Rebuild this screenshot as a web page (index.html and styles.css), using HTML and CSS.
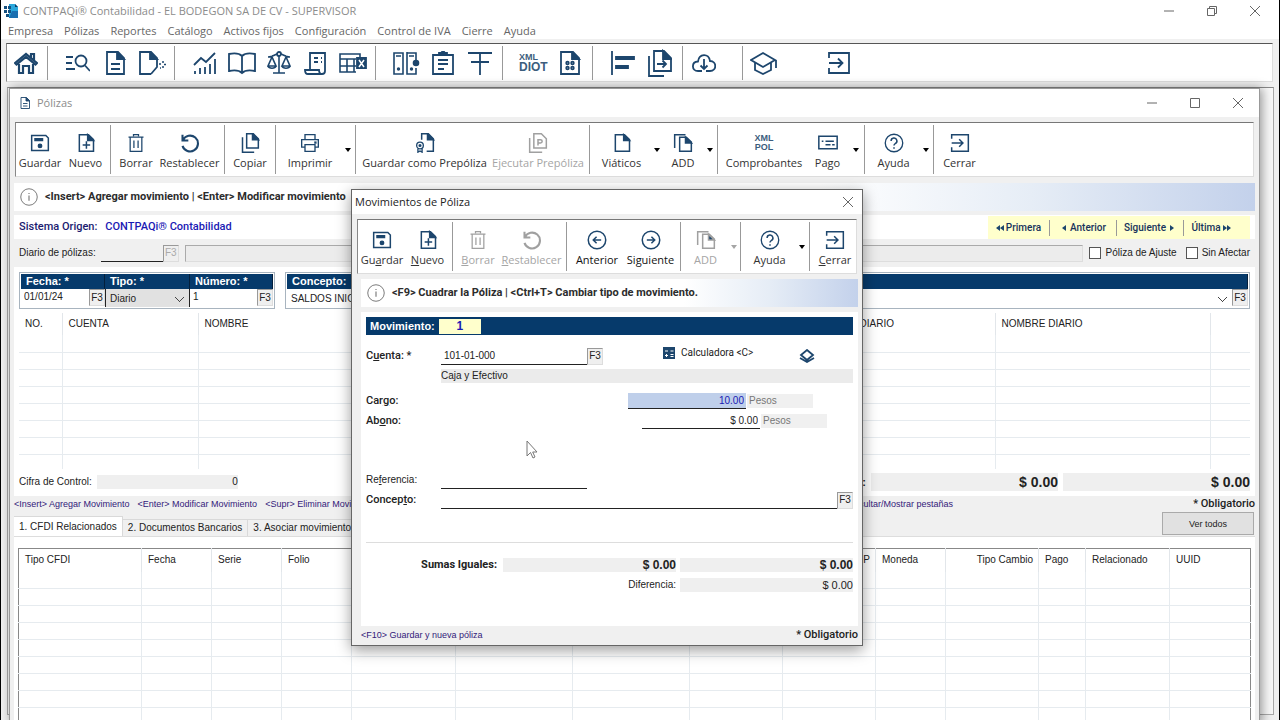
FILE: index.html
```html
<!doctype html>
<html lang="es">
<head>
  <meta charset="UTF-8">
  <title>CONTPAQi® Contabilidad</title>
  <link rel="stylesheet" href="styles.css">
</head>
<body>
  <svg class="sprite" aria-hidden="true">
    <symbol id="doc" viewBox="0 0 24 24"><path d="M4 2h11l6 6v14H4z"/><path class="fill" d="M14 2l7 7h-7z"/></symbol>
    <symbol id="doc-text" viewBox="0 0 24 24"><path d="M4 1h11l6 6v16H4z"/><path class="fill" d="M14 1l7 7h-7z"/><path d="M8 13h9M8 18h9"/></symbol>
    <symbol id="doc-plus" viewBox="0 0 24 24"><path d="M4 2h11l6 6v14H4z"/><path class="fill" d="M14 2l7 7h-7z"/><path d="M12.500 10v9M8 14.500h9"/></symbol>
    <symbol id="disk" viewBox="0 0 24 24"><path d="M2 3h17l3 3v15H2z"/><path class="fill" d="M6 7h9v2H6z"/><circle class="fill" cx="12" cy="15.500" r="2"/></symbol>
    <symbol id="trash" viewBox="0 0 24 24"><path d="M3 5h18M9 4V2h6v2M5 5v17h14V5M9.500 9v9M14.500 9v9" stroke-width="1.500"/></symbol>
    <symbol id="undo" viewBox="0 0 24 24"><path d="M3 2v7h7M3.500 8.500a9.500 9.500 0 1 1-.5 7" stroke-width="2.500"/></symbol>
    <symbol id="copy" viewBox="0 0 24 24"><path d="M8 1h8l6 6v11H8z"/><path class="fill" d="M15 1l7 7h-7z"/><path d="M3 5v18h14"/></symbol>
    <symbol id="print" viewBox="0 0 24 24"><path d="M6 8V2h12v6M6 17H2V8h20v9h-4M6 14h12v8H6z" stroke-width="1.600"/><path class="fill" d="M18 11h1v1h-1z"/></symbol>
    <symbol id="seal" viewBox="0 0 24 24"><path d="M8 8V1h8l6 6v15h-8"/><path class="fill" d="M15 1l7 7h-7z"/><circle cx="6" cy="15" r="4" stroke-width="1.600"/><circle cx="6" cy="15" r="1"/><path d="M3.500 18.500V23L6 21.500 8.500 23v-4.500" stroke-width="1.600"/></symbol>
    <symbol id="add" viewBox="0 0 24 24"><path d="M8 5h8l6 6v11H8z"/><path class="fill" d="M15 5l7 7h-7z"/><path d="M2 18V2h13"/></symbol>
    <symbol id="card" viewBox="0 0 24 24"><path d="M1 4h22v15H1z"/><path d="M9 10h10M9 14h6M17 14h3M4.500 10h2"/></symbol>
    <symbol id="help" viewBox="0 0 24 24"><circle cx="12" cy="12" r="10.500" stroke-width="1.600"/><path d="M8.500 9.500a3.500 3.500 0 1 1 5 3.200c-1 .6-1.500 1-1.500 2.300M12 17v2"/></symbol>
    <symbol id="exit" viewBox="0 0 24 24"><path d="M2 7V2h20v20H2v-5M2 12h13M11 7.500l4.500 4.500-4.500 4.500"/></symbol>
    <symbol id="prev" viewBox="0 0 24 24"><circle cx="12" cy="12" r="10.500"/><path d="M17 12H7.500M11.500 8l-4 4 4 4"/></symbol>
    <symbol id="next" viewBox="0 0 24 24"><circle cx="12" cy="12" r="10.500"/><path d="M7 12h9.500M12.500 8l4 4-4 4"/></symbol>
    <symbol id="down" viewBox="0 0 8 8"><path d="M1 2h6L4 6z" fill="currentColor" stroke="none"/></symbol>
    <symbol id="info" viewBox="0 0 24 24"><circle cx="12" cy="12" r="11" stroke-width="1.300"/><path d="M12 10v7M12 6.500v1.500" stroke-width="1.500"/></symbol>
    <symbol id="min" viewBox="0 0 10 10"><path d="M0 5h10" stroke-width="1"/></symbol>
    <symbol id="max" viewBox="0 0 10 10"><path d="M.5.5h9v9h-9z" stroke-width="1"/></symbol>
    <symbol id="close" viewBox="0 0 10 10"><path d="M0 0l10 10M10 0L0 10" stroke-width="1"/></symbol>
  </svg>

  <header class="titlebar">
    <svg class="logo" viewBox="0 0 14 14"><path d="M5 0h6l3 3v11H5z" fill="#2aa7dc"/><path d="M8 7h6v7H5z" fill="#1b6fb0"/><path d="M11 0l3 3h-3z" fill="#0c3c66"/><path d="M0 2h3v3H0zM0 6h3v3H0zM4 6h3v3H4zM4 2h3v3H4zM2 10h3v3H2z" fill="#14507f"/></svg>
    <span class="caption">CONTPAQi® Contabilidad - EL BODEGON SA DE CV - SUPERVISOR</span>
    <div class="winctl">
      <button aria-label="Minimizar"><svg><use href="#min"/></svg></button>
      <button aria-label="Restaurar"><svg viewBox="0 0 10 10"><path d="M.5 2.500h7v7h-7zM2.500 2.500v-2h7v7h-2" stroke-width="1"/></svg></button>
      <button aria-label="Cerrar"><svg><use href="#close"/></svg></button>
    </div>
  </header>

  <nav class="menu">
    <a href="#">Empresa</a><a href="#">Pólizas</a><a href="#">Reportes</a><a href="#">Catálogo</a><a href="#">Activos fijos</a><a href="#">Configuración</a><a href="#">Control de IVA</a><a href="#">Cierre</a><a href="#">Ayuda</a>
  </nav>

  <div class="mainbar">
    <div class="grp home">
      <button aria-label="Inicio"><svg viewBox="0 0 24 24"><path d="M1 12L12 3l11 9-1.500 1.500L12 6l-9.500 7.500zM17 7V3h3v6M5 13v9h4v-7h6v7h4v-9"/></svg></button>
    </div>
    <div class="grp">
      <button aria-label="Buscar"><svg viewBox="0 0 24 24"><path d="M0 6h7M0 12h6M0 18h9"/><circle cx="15" cy="10" r="5.500"/><path d="M19 14.500l5 5.500"/></svg></button>
      <button aria-label="Póliza"><svg><use href="#doc-text"/></svg></button>
      <button aria-label="Nueva póliza"><svg class="wide" viewBox="0 0 28 24"><path d="M13 23H2V1h11l6 6v9l-6 7"/><path class="fill" d="M12 1l7 7h-7z"/><path d="M21 13h2M25 10v2M25 15v2M22 17h1M26 13.500h2" stroke-width="1.500"/></svg></button>
    </div>
    <div class="grp">
      <button aria-label="Gráfica"><svg viewBox="0 0 24 24"><path d="M1 14l7-7 5 4 9-9M2 20v3M7 17v6M12 16v7M17 13v10M22 8v15"/></svg></button>
      <button aria-label="Libro"><svg class="wide" viewBox="0 0 28 24"><path d="M14 5c-3-3-8-3-13-2v17c5-1 10-1 13 2 3-3 8-3 13-2V3c-5-1-10-1-13 2zM14 5v17"/></svg></button>
      <button aria-label="Balanza"><svg viewBox="0 0 24 24"><circle cx="12" cy="3" r="2"/><path d="M12 5v17M6 22h12M1 6c4 0 6-2 9-3M23 6c-4 0-6-2-9-3M5 6l-4 9h8zM19 6l-4 9h8zM1 15c1 3 7 3 8 0M15 15c1 3 7 3 8 0" stroke-width="1.600"/></svg></button>
      <button aria-label="Diario"><svg viewBox="0 0 24 24"><path d="M6 18V2h15v18c0 2-1 3-3 3H4c-2 0-3-1-3-4h14c0 3 1 4 3 4M10 7h4M10 11h4M17 7h1M17 11h1M9 1v2M13 1v2M17 1v2"/></svg></button>
      <button aria-label="Hoja de cálculo"><svg class="wide" viewBox="0 0 28 24"><path d="M17 21H1V3h20v3M1 8h16M1 15h16M8 8v13M15 8v13" stroke-width="1.600"/><path class="fill" d="M18 7h9v10h-9z"/><path d="M20 9l5 7M25 9l-5 7" stroke="#fff" stroke-width="1.500"/></svg></button>
    </div>
    <div class="grp">
      <button aria-label="Archivos"><svg class="wide" viewBox="0 0 28 24"><path d="M2 2h9v21H2zM4 5h5M15 2h9v7M15 1v22h9v-6M17 5h5" stroke-width="1.600"/><circle class="fill" cx="6.500" cy="18" r=".8"/><circle class="fill" cx="19.500" cy="18" r=".8"/><circle class="fill" cx="24" cy="12" r="2.400"/></svg></button>
      <button aria-label="Portapapeles"><svg viewBox="0 0 24 24"><path d="M2 4h20v19H2zM7 9h10M7 13h10M7 18h6"/><path class="fill" d="M8 2h8v2H8z"/><circle cx="12" cy="2" r="1.500"/></svg></button>
      <button aria-label="Cuentas T"><svg viewBox="0 0 24 24"><path d="M0 2h24M3 11h18M12 2v22"/></svg></button>
    </div>
    <div class="grp">
      <button class="stack diot"><span>XML</span><b>DIOT</b></button>
      <button aria-label="Archivo digital"><svg viewBox="0 0 24 24"><path d="M3 1h12l6 6v16H3z"/><path class="fill" d="M14 1l7 7h-7z"/><circle cx="9.500" cy="12" r="1.300"/><circle cx="14.500" cy="12" r="1.300"/><circle cx="9.500" cy="17" r="1.300"/><circle cx="14.500" cy="17" r="1.300"/></svg></button>
    </div>
    <div class="grp">
      <button aria-label="Alinear"><svg viewBox="0 0 24 24"><path d="M1 0v24"/><path class="fill" d="M5 6h18v2H5zM5 15h12v2H5z"/></svg></button>
      <button aria-label="Exportar"><svg class="tall" viewBox="0 0 24 28"><path d="M6 2h10l7 7v13H6z"/><path class="fill" d="M15 2l8 8h-8z"/><path d="M1 7v20h15M9 15h9M14.500 11.500L18 15l-3.500 3.500"/></svg></button>
    </div>
    <div class="grp cloud">
      <button aria-label="Nube"><svg viewBox="0 0 24 24"><path d="M10 20H6C-.5 20-1 11 6 10.500 7 2 17 2 18 10c7 0 7 10 0 10h-4M12 8v10M8.500 14.500L12 18l3.500-3.500"/></svg></button>
    </div>
    <div class="grp school">
      <button aria-label="Capacitación"><svg class="wide" viewBox="0 0 28 24"><path d="M1 9l12-7 12 7-12 7zM5 12v7l8 4 8-4v-7M26 9v8"/></svg></button>
      <button aria-label="Salir"><svg><use href="#exit"/></svg></button>
    </div>
  </div>

  <main class="mdi">
    <section class="child">
      <header class="childtitle">
        <svg class="mini"><use href="#doc-text"/></svg>
        <span>Pólizas</span>
        <div class="winctl">
          <button aria-label="Minimizar"><svg><use href="#min"/></svg></button>
          <button aria-label="Maximizar"><svg><use href="#max"/></svg></button>
          <button aria-label="Cerrar"><svg><use href="#close"/></svg></button>
        </div>
      </header>

      <div class="toolbar tb-poliza">
        <button><svg><use href="#disk"/></svg>Guardar</button>
        <button class="end"><svg><use href="#doc-plus"/></svg>Nuevo</button>
        <button class="start"><svg><use href="#trash"/></svg>Borrar</button>
        <button class="end"><svg><use href="#undo"/></svg>Restablecer</button>
        <button class="start end"><svg><use href="#copy"/></svg>Copiar</button>
        <button class="start"><svg><use href="#print"/></svg>Imprimir</button>
        <button class="arrow end" aria-label="Opciones de impresión"><svg><use href="#down"/></svg></button>
        <button class="start"><svg><use href="#seal"/></svg>Guardar como Prepóliza</button>
        <button class="end" disabled><svg viewBox="0 0 24 24"><path d="M7 1h9l6 6v11H7zM2 6v17h15M12 15V8h3a2 2 0 0 1 0 4h-3"/></svg>Ejecutar Prepóliza</button>
        <button class="start"><svg><use href="#doc"/></svg>Viáticos</button>
        <button class="arrow" aria-label="Más viáticos"><svg><use href="#down"/></svg></button>
        <button><svg><use href="#add"/></svg>ADD</button>
        <button class="arrow end" aria-label="Más ADD"><svg><use href="#down"/></svg></button>
        <button class="start"><span class="stack"><b>XML</b><b>POL</b></span>Comprobantes</button>
        <button><svg><use href="#card"/></svg>Pago</button>
        <button class="arrow end" aria-label="Más pagos"><svg><use href="#down"/></svg></button>
        <button class="start"><svg><use href="#help"/></svg>Ayuda</button>
        <button class="arrow end" aria-label="Más ayuda"><svg><use href="#down"/></svg></button>
        <button class="start"><svg><use href="#exit"/></svg>Cerrar</button>
      </div>

      <div class="infobar"><svg><use href="#info"/></svg>&lt;Insert&gt; Agregar movimiento | &lt;Enter&gt; Modificar movimiento</div>

      <div class="origin">
        <span>Sistema Origen:</span><b>CONTPAQi® Contabilidad</b>
        <nav class="pager">
          <a href="#"><svg viewBox="0 0 8 8"><path class="fill" d="M4 1v6L0 4zM8 1v6L4 4z"/></svg>Primera</a>
          <a href="#"><svg viewBox="0 0 8 8"><path class="fill" d="M6 1v6L2 4z"/></svg>Anterior</a>
          <a href="#">Siguiente<svg viewBox="0 0 8 8"><path class="fill" d="M2 1v6l4-3z"/></svg></a>
          <a href="#">Última<svg viewBox="0 0 8 8"><path class="fill" d="M0 1v6l4-3zM4 1v6l4-3z"/></svg></a>
        </nav>
      </div>

      <div class="journal">
        <label for="diario">Diario de pólizas:</label>
        <input id="diario" class="line" type="text">
        <button class="f3" disabled>F3</button>
        <input class="sunken" type="text" aria-label="Nombre del diario" disabled>
        <label class="check"><input type="checkbox">Póliza de Ajuste</label>
        <label class="check"><input type="checkbox">Sin Afectar</label>
      </div>

      <div class="sheet">
        <div class="heads">
          <div class="box keys">
            <label for="fecha">Fecha: *</label>
            <label for="tipo">Tipo: *</label>
            <label for="numero">Número: *</label>
            <div class="cell"><input id="fecha" type="text" value="01/01/24"><button class="f3">F3</button></div>
            <div class="cell combo gray"><select id="tipo"><option>Diario</option></select></div>
            <div class="cell"><input id="numero" type="text" value="1"><button class="f3">F3</button></div>
          </div>
          <div class="box concept">
            <label for="concepto">Concepto:</label>
            <div class="cell combo"><select id="concepto"><option>SALDOS INICIALES</option></select><button class="f3">F3</button></div>
          </div>
        </div>

        <table class="lines">
          <colgroup><col class="c-no"><col class="c-cta"><col><col class="c-dia"><col class="c-nom"><col class="c-end"></colgroup>
          <thead><tr><th>NO.</th><th>CUENTA</th><th>NOMBRE</th><th>DIARIO</th><th>NOMBRE DIARIO</th><th></th></tr></thead>
          <tbody>
            <tr><td></td><td></td><td></td><td></td><td></td><td></td></tr>
            <tr><td></td><td></td><td></td><td></td><td></td><td></td></tr>
            <tr><td></td><td></td><td></td><td></td><td></td><td></td></tr>
            <tr><td></td><td></td><td></td><td></td><td></td><td></td></tr>
            <tr><td></td><td></td><td></td><td></td><td></td><td></td></tr>
            <tr><td></td><td></td><td></td><td></td><td></td><td></td></tr>
            <tr><td></td><td></td><td></td><td></td><td></td><td></td></tr>
            <tr><td></td><td></td><td></td><td></td><td></td><td></td></tr>
          </tbody>
        </table>

        <div class="totals">
          <span>Cifra de Control:</span><output class="control">0</output>
          <b class="sum">Sumas Iguales:</b><output>$ 0.00</output><output>$ 0.00</output>
        </div>
      </div>

      <div class="hints">
        <div class="keyshints">
          <span>&lt;Insert&gt; Agregar Movimiento</span><span>&lt;Enter&gt; Modificar Movimiento</span><span>&lt;Supr&gt; Eliminar Movimiento</span><span class="last">Ocultar/Mostrar pestañas</span>
        </div>
        <b>* Obligatorio</b>
      </div>

      <div class="tabs">
        <button class="on">1. CFDI Relacionados</button><button>2. Documentos Bancarios</button><button>3. Asociar movimientos</button>
        <button class="all">Ver todos</button>
      </div>

      <div class="tabpanel">
        <table class="cfdi">
          <colgroup><col class="w123"><col class="w70"><col class="w70"><col class="w70"><col class="w104"><col class="w117"><col class="w117"><col class="w93"><col class="w93"><col class="w70"><col class="w93"><col class="w47"><col class="w84"><col></colgroup>
          <thead><tr><th>Tipo CFDI</th><th>Fecha</th><th>Serie</th><th>Folio</th><th></th><th></th><th></th><th></th><th class="num">P</th><th>Moneda</th><th class="num">Tipo Cambio</th><th>Pago</th><th>Relacionado</th><th>UUID</th></tr></thead>
          <tbody>
            <tr><td></td><td></td><td></td><td></td><td></td><td></td><td></td><td></td><td></td><td></td><td></td><td></td><td></td><td></td></tr>
            <tr><td></td><td></td><td></td><td></td><td></td><td></td><td></td><td></td><td></td><td></td><td></td><td></td><td></td><td></td></tr>
            <tr><td></td><td></td><td></td><td></td><td></td><td></td><td></td><td></td><td></td><td></td><td></td><td></td><td></td><td></td></tr>
            <tr><td></td><td></td><td></td><td></td><td></td><td></td><td></td><td></td><td></td><td></td><td></td><td></td><td></td><td></td></tr>
            <tr><td></td><td></td><td></td><td></td><td></td><td></td><td></td><td></td><td></td><td></td><td></td><td></td><td></td><td></td></tr>
            <tr><td></td><td></td><td></td><td></td><td></td><td></td><td></td><td></td><td></td><td></td><td></td><td></td><td></td><td></td></tr>
            <tr><td></td><td></td><td></td><td></td><td></td><td></td><td></td><td></td><td></td><td></td><td></td><td></td><td></td><td></td></tr>
            <tr><td></td><td></td><td></td><td></td><td></td><td></td><td></td><td></td><td></td><td></td><td></td><td></td><td></td><td></td></tr>
            <tr><td></td><td></td><td></td><td></td><td></td><td></td><td></td><td></td><td></td><td></td><td></td><td></td><td></td><td></td></tr>
          </tbody>
        </table>
      </div>
    </section>
  </main>

  <section class="dialog" role="dialog" aria-label="Movimientos de Póliza">
    <header class="dlgtitle">
      <span>Movimientos de Póliza</span>
      <button aria-label="Cerrar"><svg><use href="#close"/></svg></button>
    </header>

    <div class="toolbar tb-mov">
      <button><svg><use href="#disk"/></svg><span>Gu<u>a</u>rdar</span></button>
      <button class="end"><svg><use href="#doc-plus"/></svg><span><u>N</u>uevo</span></button>
      <button class="start" disabled><svg><use href="#trash"/></svg><span><u>B</u>orrar</span></button>
      <button class="end" disabled><svg><use href="#undo"/></svg><span><u>R</u>establecer</span></button>
      <button class="start strong"><svg><use href="#prev"/></svg>Anterior</button>
      <button class="end strong"><svg><use href="#next"/></svg>Siguiente</button>
      <button class="start" disabled><svg><use href="#add"/></svg>ADD</button>
      <button class="arrow end" aria-label="Más ADD" disabled><svg><use href="#down"/></svg></button>
      <button class="start"><svg><use href="#help"/></svg>Ayuda</button>
      <button class="arrow end" aria-label="Más ayuda"><svg><use href="#down"/></svg></button>
      <button class="start"><svg><use href="#exit"/></svg><span><u>C</u>errar</span></button>
    </div>

    <div class="infobar"><svg><use href="#info"/></svg>&lt;F9&gt; Cuadrar la Póliza | &lt;Ctrl+T&gt; Cambiar tipo de movimiento.</div>

    <form class="mov">
      <div class="movbar"><label for="mov">Movimiento:</label><input id="mov" type="text" value="1"></div>
      <div class="row">
        <label class="b" for="cuenta">C<u>u</u>enta: *</label>
        <input id="cuenta" class="line mid" type="text" value="101-01-000"><button type="button" class="f3">F3</button>
        <button type="button" class="calc"><svg viewBox="0 0 12 12"><path class="fill" d="M0 0h12v12H0z"/><path d="M2 4h3M7.500 4h3M2 8.500h3M3.500 7v3M7.500 7.500h3M7.500 9.500h3" stroke="#fff" stroke-width="1"/></svg>Calculadora &lt;C&gt;</button>
        <button type="button" class="layers" aria-label="Segmentos"><svg viewBox="0 0 16 14"><path d="M8 1l6 5-6 5-6-5zM1 9l7 4 7-4" stroke-width="1.800"/></svg></button>
      </div>
      <div class="row name"><output>Caja y Efectivo</output></div>
      <div class="row">
        <label class="b" for="cargo">Car<u>g</u>o:</label>
        <input id="cargo" class="line money active" type="text" value="10.00"><span class="unit">Pesos</span>
      </div>
      <div class="row abono">
        <label class="b" for="abono">Ab<u>o</u>no:</label>
        <input id="abono" class="line money" type="text" value="$ 0.00"><span class="unit">Pesos</span>
      </div>
      <div class="row ref">
        <label for="referencia">Re<u>f</u>erencia:</label>
        <input id="referencia" class="line mid" type="text">
      </div>
      <div class="row">
        <label class="b" for="concepto-mov">Concep<u>t</u>o:</label>
        <input id="concepto-mov" class="line long" type="text"><button type="button" class="f3">F3</button>
      </div>
      <hr>
      <div class="sums">
        <b>Sumas Iguales:</b><output class="b">$ 0.00</output><output class="b">$ 0.00</output>
        <span class="dif">Diferencia:</span><output>$ 0.00</output>
      </div>
    </form>

    <footer class="dlgfoot"><span>&lt;F10&gt; Guardar y nueva póliza</span><b>* Obligatorio</b></footer>
  </section>

  <svg class="pointer" viewBox="0 0 12 19"><path d="M1 1v15l3.500-3.500L7 18l2-1-2.300-5H11z" fill="#fff" stroke="#777" stroke-width="1"/></svg>
</body>
</html>
```
FILE: styles.css
```css
*{box-sizing:border-box;}
body{margin:0;
     height:100vh;
     overflow:hidden;
     position:relative;
     display:flex;
     flex-direction:column;
     background:#f0f0f0;
     border:solid #000;
     border-width:0 1px;
     color:#222;
     font:10px/14px "Liberation Sans", Arial, sans-serif;}
button,input,select{font:inherit;
     color:inherit;
     margin:0;
     padding:0;
     border:0;
     border-radius:0;
     background:none;}
a{color:inherit;
  text-decoration:none;}
svg{fill:none;
    stroke:#1d466d;
    stroke-width:1.8;
    flex:none;}
.fill{fill:#1d466d;}
.sprite{display:none;}

/* ventana principal */
.titlebar{display:flex;
     align-items:center;
     height:22px;
     padding:0 3px;
     background:#fff;
     color:#8c8c8c;
     font:11px/20px "Open Sans", "Noto Sans", sans-serif;}
.logo{width:14px;
      height:14px;
      margin-right:5px;
      stroke:none;}
.winctl{display:flex;
     margin-left:auto;}
.winctl button{width:43px;
     height:20px;
     display:grid;
     place-items:center;}
.winctl svg,.dlgtitle svg{width:10px;
     height:10px;
     stroke:#666;}
.menu{display:flex;
     gap:11px;
     height:17px;
     padding-left:7px;
     background:#fff;
     color:#666;
     font:11px/17px "Open Sans", "Noto Sans", sans-serif;}
.mainbar{display:flex;
     align-items:center;
     height:39px;
     margin:4px 6px 5px 5px;
     background:#fff;
     border:1px solid #ddd;
     border-top:1px solid #555;
     border-left:1px solid #888;}
.grp{display:flex;
     height:34px;
     padding:0 4px 0 11px;
     border-right:1px solid #999;}
.grp button{width:37px;
     display:grid;
     place-items:center;}
.grp svg{width:24px;
     height:24px;}
.grp .wide{width:28px;}
.grp .tall{height:28px;}
.home{padding:0 3px 0 0;}
.home svg{stroke-width:2.2;}
.cloud{padding:0 20px 0 2px;}
.school{gap:38px;
     padding:0 2px;
     border:0;}
.stack{display:block;
     color:#3c5d7d;
     font:bold 9px/9px "Liberation Sans", Arial, sans-serif;}
.stack b{display:block;}
.grp .diot{display:flex;
     flex-direction:column;
     justify-content:center;
     align-items:flex-start;
     padding-left:5px;}
.diot b{font-size:12px;
     line-height:11px;}

/* ventana de pólizas */
.mdi{flex:1;
     min-height:0;
     margin:0 5px 5px 6px;
     background:#f8f8f8;
     border:1px solid #a8a8a8;
     border-top-color:#888;}
.child{margin:0 13px 0 1px;
     padding:0 4px;
     background:#f0f0f0;
     border:solid #999;
     border-width:1px 1px 0;
     box-shadow:2px 0 10px rgba(0,0,0,.4);}
.childtitle{display:flex;
     align-items:center;
     height:28px;
     margin:0 -4px 5px;
     padding-left:9px;
     background:#fff;
     color:#8c8c8c;
     font:11px/20px "Open Sans", "Noto Sans", sans-serif;}
.mini{width:12px;
     height:12px;
     margin-right:6px;}
.toolbar{display:grid;
     height:55px;
     margin:0 1px;
     padding:2px 0;
     background:#fff;
     border:1px solid #ddd;
     border-top:1px solid #777;
     border-left:1px solid #888;
     color:#333;
     font:11px/16px "Open Sans", "Noto Sans", sans-serif;}
.tb-poliza{grid-template-columns:48px 47px 47px 67px 51px 65px 15px 134px 100px 60px 14px 38px 16px 89px 41px 17px 54px 15px 48px;}
.tb-mov{grid-template-columns:48px 47px 47px 67px 57px 57px 46px 14px 54px 15px 47px;}
.toolbar button{display:flex;
     flex-direction:column;
     align-items:center;
     justify-content:flex-end;
     gap:2px;
     padding-bottom:3px;
     white-space:nowrap;}
.toolbar .start{padding-left:3px;}
.toolbar .end{padding-right:3px;
     border-right:1px solid #999;}
.toolbar svg{width:20px;
     height:20px;}
.toolbar .stack{padding-bottom:1px;}
.toolbar .arrow{padding:0;
     justify-content:center;
     color:#000;}
.toolbar .arrow svg{width:8px;
     height:8px;}
.toolbar .strong{color:#111;}
.toolbar button:disabled{color:#a5a5a5;}
.toolbar button:disabled svg{stroke:#a0a0a0;}
.toolbar button:disabled .fill{fill:#a0a0a0;}
.infobar{display:flex;
     align-items:center;
     gap:7px;
     height:28px;
     margin:6px 0 4px;
     padding-left:6px;
     background:linear-gradient(90deg,#fff 65%,#e6edf6 82%,#c3d1eb);
     color:#2c2c2c;
     font:bold 11px/16px Roboto, sans-serif;}
.infobar svg{width:18px;
     height:18px;
     stroke:#777;}
.origin{display:flex;
     align-items:center;
     gap:8px;
     height:24px;
     padding:0 5px;
     background:#fff;
     color:#1b1b70;
     font:500 11px/16px Roboto, sans-serif;}
.origin b{font-weight:500;
     color:#1a1ab4;}
.pager{display:grid;
     grid-template-columns:62px 67px 67px 66px;
     align-self:stretch;
     align-items:center;
     margin:1px 0 0 auto;
     background:#ffffcc;
     color:#17335c;
     font-size:10px;}
.pager a{display:flex;
     align-items:center;
     justify-content:center;
     gap:2px;
     border-right:1px solid #999;}
.pager a:last-child{border:0;
     padding-right:12px;}
.pager svg{width:8px;
     height:8px;
     stroke:none;}
.journal{display:flex;
     align-items:center;
     height:28px;
     padding:0 5px;}
.journal .line{width:62px;
     margin:0 0 0 5px;}
.line{height:18px;
     padding-left:3px;
     border-bottom:1px solid #222;}
.f3{width:16px;
     height:17px;
     flex:none;
     background:#efefef;
     border:1px solid #ddd;
     border-top-color:#999;
     border-left-color:#999;
     text-align:center;}
.f3:disabled{color:#aaa;}
.sunken{flex:1;
     height:17px;
     margin:0 6px;
     border:1px solid #ddd;
     border-top-color:#aaa;
     border-left-color:#aaa;
     background:#ececec;}
.check{display:flex;
     align-items:center;
     gap:4px;
     margin-left:9px;
     white-space:nowrap;}
.sunken + .check{margin-left:0;}
.check input{appearance:none;
     width:12px;
     height:12px;
     background:#fff;
     border:1px solid #555;}

/* encabezado y movimientos */
.sheet{padding:5px;
     background:#fff;}
.heads{display:flex;
     gap:10px;}
.box{display:grid;
     grid-template-rows:15px 18px;
     padding:1px;
     border:1px solid #a8b4bf;}
.keys{grid-template-columns:84px 85px 83px;}
.concept{flex:1;}
.box label{padding-left:5px;
     background:#063a6b;
     border-right:1px solid #031f3c;
     color:#fff;
     font-weight:bold;
     line-height:15px;
     font-size:11px;}
.cell{display:flex;
     min-width:0;}
.cell input{flex:1;
     min-width:0;
     padding:0 0 3px 3px;}
.combo{position:relative;}
.combo.gray{background:#e1e1e1;
     border:solid #222;
     border-width:0 1px;}
.combo select{appearance:none;
     flex:1;
     padding:2px 0 0 4px;
     background:linear-gradient(45deg,transparent 45%,#444 45% 55%,transparent 55%) no-repeat right 9px top 8px / 5px 5px,
                linear-gradient(-45deg,transparent 45%,#444 45% 55%,transparent 55%) no-repeat right 5px top 8px / 5px 5px;}
table{width:100%;
     table-layout:fixed;
     border-collapse:collapse;}
th{height:22px;
   padding:0 0 0 6px;
   border-right:1px solid #e2e6ea;
   font-weight:normal;
   text-align:left;}
td{height:17px;
   padding:0;
   border:solid #e6ebef;
   border-width:0 1px 1px 0;}
th:last-child,td:last-child{border-right:0;}
.num{padding-right:5px;
     text-align:right;}
.lines{margin-top:4px;}
.lines tbody tr:last-child td{height:15px;
     border-bottom:0;}
.c-no{width:43px;}
.c-cta{width:136px;}
.c-dia{width:142px;}
.c-nom{width:215px;}
.c-end{width:40px;}
.totals{display:flex;
     align-items:center;
     gap:5px;
     height:18px;
     margin-top:4px;}
output{background:#efefef;
     text-align:right;}
.totals output{width:187px;
     font:bold 14px/18px "Liberation Sans", Arial, sans-serif;}
.totals .control{width:141px;
     font:10px/14px "Liberation Sans", Arial, sans-serif;}
.sum{margin-left:auto;
     font-size:11px;}
.hints{display:flex;
     justify-content:space-between;
     align-items:center;
     height:16px;
     color:#222;}
.hints b,.dlgfoot b{font:500 11px/14px Roboto, sans-serif;}
.keyshints{display:flex;
     gap:8px;
     width:939px;
     color:#33207a;
     font-size:9px;}
.keyshints .last{margin-left:auto;}
.tabs{display:flex;
     align-items:flex-end;
     height:24px;}
.tabs button{height:17px;
     padding:0 5px;
     border:solid #d9d9d9;
     border-width:1px 1px 0 0;
     white-space:nowrap;}
.tabs .on{height:20px;
     background:#fff;}
.tabs .all{align-self:flex-start;
     width:92px;
     height:23px;
     margin:0 1px 0 auto;
     background:#e1e1e1;
     border:1px solid #aaa;
     font-size:9px;}
.tabpanel{padding:11px 4px 0;
     background:#fff;
     border-top:1px solid #ddd;}
.cfdi{border:1px solid #888;}
.cfdi th{height:23px;}
.w47{width:47px;}
.w70{width:70px;}
.w84{width:84px;}
.w93{width:93px;}
.w104{width:104px;}
.w117{width:117px;}
.w123{width:123px;}

/* diálogo de movimientos */
.dialog{position:absolute;
     left:350px;
     top:189px;
     width:512px;
     background:#f0f0f0;
     border:1px solid #666;
     box-shadow:0 4px 14px rgba(0,0,0,.4);}
.dlgtitle{display:flex;
     align-items:center;
     justify-content:space-between;
     height:24px;
     margin-bottom:5px;
     padding:0 4px 0 3px;
     background:#fff;
     font:11px/20px "Open Sans", "Noto Sans", sans-serif;}
.dlgtitle button{width:20px;
     height:20px;
     display:grid;
     place-items:center;}
.dialog .toolbar{margin:0 5px;}
.dialog .infobar{margin:5px 4px 5px 9px;}
.mov{margin:0 4px 0 9px;
     height:314px;
     padding:5px;
     background:#fff;}
.movbar{display:flex;
     align-items:center;
     gap:4px;
     height:18px;
     margin-bottom:11px;
     padding-left:4px;
     background:#063a6b;
     color:#fff;
     font:bold 11px/16px "Liberation Sans", Arial, sans-serif;}
.movbar input{width:42px;
     height:15px;
     background:#ffffcc;
     color:#1a1ab4;
     font-size:12px;
     text-align:center;}
.row{display:flex;
     align-items:center;
     height:20px;}
.row label{width:75px;
     flex:none;}
.b{font:500 11px/14px Roboto, sans-serif;}
.mid{width:146px;}
.long{flex:1;}
.calc{display:flex;
     align-items:center;
     gap:6px;
     margin-left:60px;
     padding-bottom:6px;
     font:10px/14px Roboto, sans-serif;}
.calc svg{width:12px;
     height:12px;}
.layers{margin-left:46px;}
.layers svg{display:block;
     width:16px;
     height:14px;}
.name{margin-bottom:5px;}
.name output{flex:1;
     margin-left:75px;
     background:#ebebeb;
     text-align:left;}
.money{width:118px;
     height:16px;
     margin-left:187px;
     padding-right:2px;
     text-align:right;}
.abono .money{margin-left:201px;}
.active{background:#bfcfea;
     color:#1a1ab4;}
.unit{width:66px;
     margin-left:1px;
     padding-left:2px;
     background:#f0f0f0;
     color:#777;}
.ref{margin-top:39px;}
hr{margin:32px 0 15px;
   border:0;
   border-top:1px solid #ddd;}
.sums{display:grid;
     grid-template-columns:1fr 173px 173px;
     gap:6px 4px;
     text-align:right;}
.sums b{padding-right:2px;
     font:bold 11px/14px Roboto, sans-serif;}
.sums output{font-size:11px;}
.sums .b{font:bold 12px/14px "Liberation Sans", Arial, sans-serif;}
.dif{grid-column:1 / 3;}
.dlgfoot{display:flex;
     align-items:center;
     justify-content:space-between;
     height:19px;
     padding:0 4px 2px 9px;}
.dlgfoot span{color:#33207a;
     font-size:9px;}

.pointer{position:absolute;
     left:525px;
     top:440px;
     width:12px;
     height:19px;}
```
